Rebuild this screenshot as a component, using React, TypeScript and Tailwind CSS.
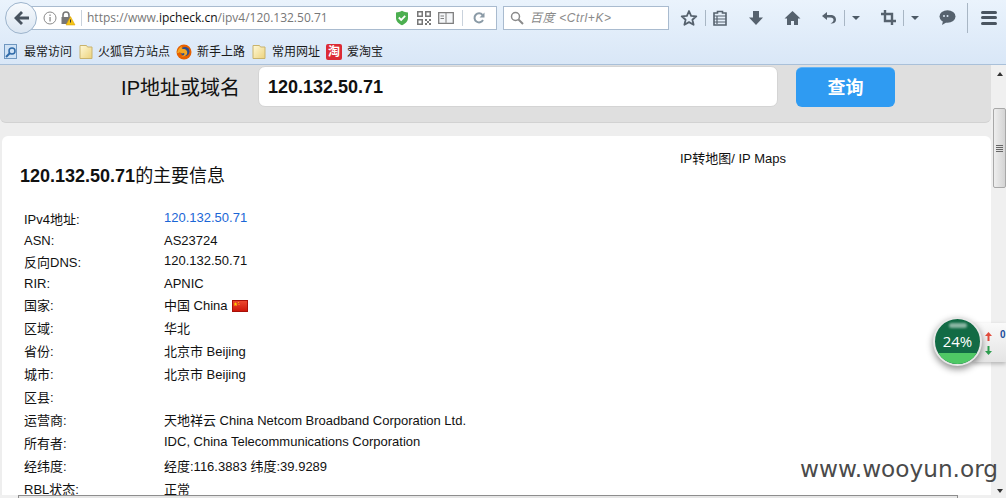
import React from "react";

const rows: { l: string; v?: React.ReactNode; h: string; rp?: string; vp?: string }[] = [
  { l: "IPv4地址:", v: <span className="text-[#1a66d6]">120.132.50.71</span>, h: "h-[23px]", rp: "translate-y-px", vp: "-translate-y-[2px]" },
  { l: "ASN:", v: "AS23724", h: "h-[22px]" },
  { l: "反向DNS:", v: "120.132.50.71", h: "h-[21px]", vp: "-translate-y-[2px]" },
  { l: "RIR:", v: "APNIC", h: "h-[22px]" },
  { l: "国家:", v: <span className="inline-flex items-center gap-1">中国 China <Flag /></span>, h: "h-[22px]" },
  { l: "区域:", v: "华北", h: "h-[23px]" },
  { l: "省份:", v: "北京市 Beijing", h: "h-[23px]" },
  { l: "城市:", v: "北京市 Beijing", h: "h-[23px]" },
  { l: "区县:", h: "h-[23px]" },
  { l: "运营商:", v: "天地祥云 China Netcom Broadband Corporation Ltd.", h: "h-[23px]" },
  { l: "所有者:", v: "IDC, China Telecommunications Corporation", h: "h-[23px]", vp: "-translate-y-[2px]" },
  { l: "经纬度:", v: "经度:116.3883 纬度:39.9289", h: "h-[23px]" },
  { l: "RBL状态:", v: "正常", h: "h-[23px]" },
];

function Flag() {
  return (
    <svg width="16" height="12" viewBox="0 0 16 12" className="inline-block">
      <defs>
        <linearGradient id="flagfill" x1="0" y1="0" x2="0" y2="1">
          <stop offset="0" stopColor="#ee4a30" />
          <stop offset="1" stopColor="#cc1508" />
        </linearGradient>
      </defs>
      <rect x="0.5" y="0.5" width="15" height="11" fill="url(#flagfill)" stroke="#a81008" />
      <path d="M3.500 2l.6 1.400 1.400.1-1 1 .3 1.500-1.300-.8-1.200.8.300-1.500-1-1 1.400-.1z" fill="#ffd000" />
      <circle cx="6.500" cy="2.500" r=".5" fill="#ffd000" />
      <circle cx="7" cy="4.500" r=".5" fill="#ffd000" />
    </svg>
  );
}

function Folder() {
  return (
    <svg width="14" height="16" viewBox="0 0 14 16" className="shrink-0">
      <defs>
        <linearGradient id="fg" x1="0" y1="0" x2="1" y2="1">
          <stop offset="0" stopColor="#fff9d8" />
          <stop offset="1" stopColor="#ecd27c" />
        </linearGradient>
      </defs>
      <path d="M1 1.500h6.500l1 1.500H13v11.500H1z" fill="url(#fg)" stroke="#c9b36c" />
    </svg>
  );
}

function Sep({ h = "h-[16px]" }: { h?: string }) {
  return <div className={`w-px ${h} bg-[#a8b6c4]`} />;
}

function Caret() {
  return <div className="w-0 h-0 border-x-[4px] border-x-transparent border-t-[4px] border-t-[#4d5a66]" />;
}

const I = "#56626e";

export default function App() {
  return (
    <div className="w-[1006px] h-[498px] overflow-hidden flex flex-col bg-[#eeeeee] font-['Liberation_Sans','Noto_Sans_CJK_SC',sans-serif] text-[13px] text-[#111]">
      {/* browser chrome */}
      <div className="h-[65px] shrink-0 flex flex-col border-b border-[#a9c0d9] bg-gradient-to-b from-[#eaf3fc] to-[#d9e7f7]">
        <div className="h-[36px] flex items-center pl-[5px] relative">
          {/* url bar */}
          <div className="ml-[12px] h-[24px] w-[480px] bg-white border border-[#a9bbcf] flex items-center pl-[25px] pr-[11px]">
            <svg width="14" height="14" viewBox="0 0 14 14" className="shrink-0">
              <circle cx="7" cy="7" r="6" fill="none" stroke="#8a8a8a" />
              <rect x="6.400" y="6" width="1.300" height="4.500" fill="#8a8a8a" />
              <rect x="6.400" y="3.500" width="1.300" height="1.400" fill="#8a8a8a" />
            </svg>
            <svg width="16" height="16" viewBox="0 0 16 16" className="ml-[3px] shrink-0">
              <path d="M3 8V5a3 3 0 016 0v3" fill="none" stroke="#777" strokeWidth="1.600" />
              <rect x="1.500" y="7" width="9" height="7" fill="#777" />
              <path d="M10.500 6.500l4.500 8.500H6z" fill="#f5c518" stroke="#d89c00" strokeWidth=".5" />
              <rect x="10" y="9.500" width="1" height="3" fill="#333" />
            </svg>
            <div className="w-px h-[16px] bg-[#c9d2dc] ml-[5px]" />
            <div className="ml-[5px] text-[12px] font-['Open_Sans',sans-serif] text-[#777] whitespace-nowrap">
              https://www.<span className="text-[#111]">ipcheck.cn</span>/ipv4/120.132.50.71
            </div>
            <div className="flex-1" />
            <svg width="14" height="16" viewBox="0 0 14 16" className="shrink-0">
              <path d="M1 2.500c2 0 4-.7 6-1.700 2 1 4 1.700 6 1.700V8c0 3.500-3 6-6 7.200C4 14 1 11.500 1 8z" fill="#4caf50" />
              <path d="M3.800 7.500l2.400 2.400 4-4" fill="none" stroke="#fff" strokeWidth="1.800" />
            </svg>
            <svg width="14" height="14" viewBox="0 0 14 14" className="ml-[8px] shrink-0" fill="#777">
              <path d="M0 0h6v6H0zM1.500 1.500v3h3v-3zM8 0h6v6H8zM9.500 1.500v3h3v-3zM0 8h6v6H0zM1.500 9.500v3h3v-3z" fillRule="evenodd" />
              <path d="M8 8h2v2H8zM12 8h2v2h-2zM10 10h2v2h-2zM8 12h2v2H8zM12 12h2v2h-2z" />
            </svg>
            <svg width="16" height="12" viewBox="0 0 16 12" className="ml-[7px] shrink-0">
              <path d="M.700.700h14.600v10.600H9l-1 .7-1-.7H.700z" fill="#f4f6f8" stroke="#7e7e7e" strokeWidth="1.300" />
              <path d="M8 1v10M2.500 4h3.500M2.500 6.500h3.500" stroke="#7e7e7e" />
            </svg>
            <div className="w-px h-[16px] bg-[#c9d2dc] ml-[8px]" />
            <svg width="12" height="12" viewBox="0 0 12 12" className="ml-[10px] shrink-0">
              <path d="M10 8a4.500 4.500 0 11-.5-5" fill="none" stroke="#8a9aa6" strokeWidth="2" />
              <path d="M11.500.500v5h-5z" fill="#8a9aa6" />
            </svg>
          </div>
          {/* search */}
          <div className="ml-[6px] h-[24px] w-[166px] bg-white border border-[#a9bbcf] flex items-center pl-[6px]">
            <svg width="14" height="14" viewBox="0 0 14 14" className="shrink-0">
              <circle cx="5.500" cy="5.500" r="4" fill="none" stroke="#8a8a8a" strokeWidth="1.500" />
              <path d="M8.500 8.500l4.500 4.500" stroke="#8a8a8a" strokeWidth="2" />
            </svg>
            <span className="ml-[6px] text-[12px] italic text-[#8a8a8a] whitespace-nowrap tracking-[0.6px]">百度 &lt;Ctrl+K&gt;</span>
          </div>
          {/* toolbar icons */}
          <div className="ml-[12px] flex items-center -mt-[1px]">
            <svg width="18" height="18" viewBox="0 0 18 18" className="-ml-[1px]">
              <path d="M9 2l2.100 4.800 5.200.5-3.900 3.400 1.200 5.100L9 13.100l-4.600 2.700 1.200-5.100-3.900-3.400 5.200-.5z" fill="none" stroke={I} strokeWidth="1.800" strokeLinejoin="round" />
            </svg>
            <div className="ml-[7px]"><Sep /></div>
            <svg width="14" height="16" viewBox="0 0 14 16" className="ml-[7px]">
              <path d="M1 3h3.500V1.500h5V3H13v12H1z" fill="none" stroke={I} strokeWidth="1.600" />
              <path d="M1 6h12M1 9h12M1 12h12M4 6v8" stroke={I} strokeWidth="1.200" />
            </svg>
            <svg width="16" height="16" viewBox="0 0 16 16" className="ml-[21px]">
              <path d="M5 1h6v6.500h4L8 15 1 7.500h4z" fill={I} />
            </svg>
            <svg width="17" height="16" viewBox="0 0 17 16" className="ml-[20px]">
              <path d="M8.500 1L.500 8.500h2.500V15h4v-4h3v4h4V8.500h2.500z" fill={I} />
            </svg>
            <svg width="16" height="16" viewBox="0 0 16 16" className="ml-[20px]">
              <path d="M6 2L1 6l5 4V7.500h3.500c2 0 3 1.200 3 2.600 0 1.400-1.200 2.900-3 3.400 3.500.5 5.500-1.500 5.500-3.800C15 7 13 5 9.500 5H6z" fill={I} />
            </svg>
            <div className="ml-[7px]"><Sep /></div>
            <div className="ml-[7px]"><Caret /></div>
            <svg width="15" height="15" viewBox="0 0 15 15" className="ml-[21px]">
              <path d="M4 0v11h11M0 4h11v11" fill="none" stroke={I} strokeWidth="2.400" />
            </svg>
            <div className="ml-[7px]"><Sep /></div>
            <div className="ml-[7px]"><Caret /></div>
            <svg width="17" height="15" viewBox="0 0 17 15" className="ml-[20px]">
              <ellipse cx="8.500" cy="6.500" rx="8" ry="6.200" fill={I} />
              <path d="M4 11l-1 4 5-3z" fill={I} />
              <circle cx="5" cy="6" r="1" fill="#dbe8f6" />
              <circle cx="8.500" cy="6" r="1" fill="#dbe8f6" />
            </svg>
            <div className="ml-[11px]"><Sep h="h-[30px]" /></div>
            <div className="ml-[13px] w-[16px] flex flex-col gap-[2.500px]">
              <div className="h-[3px] bg-[#4a5560] rounded-sm" />
              <div className="h-[3px] bg-[#4a5560] rounded-sm" />
              <div className="h-[3px] bg-[#4a5560] rounded-sm" />
            </div>
          </div>
          {/* back button, over the url bar */}
          <div className="absolute left-[5px] top-[2px] w-[32px] h-[32px] rounded-full bg-gradient-to-b from-[#f7fafd] to-[#dbe6f2] border border-[#9db4cc] flex items-center justify-center">
            <svg width="15" height="14" viewBox="0 0 15 14">
              <path d="M7 0L0 7l7 7 2-2-3.500-3.500H15v-3H5.500L9 2z" fill="#48535f" />
            </svg>
          </div>
        </div>
        {/* bookmarks */}
        <div className="flex-1 flex items-center pl-[4px] pt-[3px] text-[12px] text-[#1a1a1a] whitespace-nowrap">
          <svg width="15" height="15" viewBox="0 0 15 15" className="shrink-0">
            <rect x=".5" y=".5" width="12" height="14" fill="#cfe2f5" stroke="#6f97c0" />
            <circle cx="8" cy="7" r="3" fill="none" stroke="#2f6aa8" strokeWidth="1.500" />
            <path d="M6 9l-4 4" stroke="#2f6aa8" strokeWidth="2" />
          </svg>
          <span className="ml-[5px]">最常访问</span>
          <div className="ml-[7px]"><Folder /></div>
          <span className="ml-[5px]">火狐官方站点</span>
          <svg width="16" height="16" viewBox="0 0 16 16" className="ml-[6px] shrink-0">
            <circle cx="8" cy="8" r="7.500" fill="#e66000" />
            <circle cx="9" cy="7.500" r="4.500" fill="#2a4d8f" />
            <path d="M1 9c1-4 3-6 5-7 -1 2 0 3 1 3 3 0 5 2 4 5-1 2-4 3-6 2 3 0 4-2 3-3-2 1-4 0-4-1-1 1-2 1-3 1z" fill="#f5a623" />
          </svg>
          <span className="ml-[5px]">新手上路</span>
          <div className="ml-[7px]"><Folder /></div>
          <span className="ml-[6px]">常用网址</span>
          <div className="ml-[6px] w-[16px] h-[16px] rounded-[2px] bg-[#dc2b35] text-white text-[12px] leading-[16px] text-center font-bold overflow-hidden shrink-0">淘</div>
          <span className="ml-[5px]">爱淘宝</span>
        </div>
      </div>

      {/* page viewport */}
      <div className="flex-1 flex min-h-0 relative">
        <div className="w-[991px] shrink-0 flex flex-col overflow-hidden">
          {/* search panel */}
          <div className="h-[58px] shrink-0 bg-[#dfdfdf] border-b border-[#d2d2d2] rounded-b-[6px] flex items-start">
            <div className="w-[240px] text-right text-[20px] leading-[24px] pt-[11px]">IP地址或域名</div>
            <div className="ml-[18px] mt-[1px] w-[520px] h-[41px] bg-white border border-[#d4d4d4] rounded-[7px] pl-[9px] text-[18px] font-bold leading-[40px]">120.132.50.71</div>
            <div className="ml-[18px] mt-[2px] w-[99px] h-[40px] bg-[#2f9bf2] border-t border-[#62b3f5] rounded-[6px] text-white text-[18px] font-bold text-center leading-[40px]">查询</div>
          </div>
          {/* card */}
          <div className="mt-[13px] ml-[2px] flex-1 min-h-0 bg-white rounded-t-[6px] relative pl-[18px] overflow-hidden">
            <div className="absolute left-[678px] top-[15px] text-[13px] leading-[16px]">IP转地图/ IP Maps</div>
            <div className="pt-[28px] text-[18px] leading-[24px]"><b>120.132.50.71</b>的主要信息</div>
            <div className="mt-[19px] ml-[4px] flex flex-col text-[13px]">
              {rows.map((r) => (
                <div key={r.l} className={`flex items-center shrink-0 ${r.h} ${r.rp ?? ""}`}>
                  <div className="w-[140px] shrink-0">{r.l}</div>
                  <div className={r.vp}>{r.v}</div>
                </div>
              ))}
            </div>
          </div>
        </div>
        {/* vertical scrollbar */}
        <div className="flex-1 bg-[#f0f0f0] relative">
          <div className="absolute left-[6px] top-[7px] w-0 h-0 border-x-[3px] border-x-transparent border-b-[4px] border-b-[#333]" />
          <div className="absolute left-[2px] top-[43px] w-[13px] h-[80px] rounded-[2px] border border-[#a8a8a8] bg-gradient-to-r from-[#eeeeee] to-[#d4d4d4] flex flex-col items-center justify-center gap-[1px]">
            <div className="w-[7px] h-px bg-[#666]" />
            <div className="w-[7px] h-px bg-[#666]" />
            <div className="w-[7px] h-px bg-[#666]" />
            <div className="w-[7px] h-px bg-[#666]" />
          </div>
          <div className="absolute left-[6px] bottom-[5px] w-0 h-0 border-x-[3px] border-x-transparent border-t-[4px] border-t-[#333]" />
        </div>

        {/* floating network meter */}
        <div className="absolute left-[973px] top-[258px] w-[33px] h-[39px] bg-gradient-to-b from-[#fafafa] to-[#e4e4e4] shadow-[0_2px_4px_rgba(0,0,0,0.25)] rounded-l-[2px] text-[10px] leading-[12px]">
          <svg width="7" height="9" viewBox="0 0 7 9" className="absolute left-[12px] top-[9px]"><path d="M3.500 0L7 4H4.500v5h-2V4H0z" fill="#e24b3b" /></svg>
          <svg width="7" height="9" viewBox="0 0 7 9" className="absolute left-[12px] top-[23px]"><path d="M3.500 9L7 5H4.500V0h-2v5H0z" fill="#2e9e4f" /></svg>
          <span className="absolute left-[27px] top-[6px] text-[#1b4f9c] font-bold">0</span>
        </div>
        <div className="absolute left-[933px] top-[252px] w-[49px] h-[49px] rounded-full border-[2px] border-[#e8e8e8] shadow-[0_3px_7px_rgba(0,0,0,0.45)] overflow-hidden bg-[#126b45] flex items-center justify-center">
          <div className="absolute left-0 right-0 bottom-0 h-[11px] bg-[#4fc865]" />
          <div className="absolute left-[14px] top-[4px] w-[18px] h-[5px] rounded-full bg-white/50 blur-[1px]" />
          <span className="relative text-white text-[15px] leading-[16px] font-['Open_Sans',sans-serif] -mt-[2px]">24%</span>
        </div>

        {/* watermark */}
        <div className="absolute left-[800px] top-[390px] text-[23.2px] leading-[28px] text-[#4a4a4a] font-['DejaVu_Sans',sans-serif] whitespace-nowrap">www.wooyun.org</div>

        {/* horizontal scrollbar edge */}
        <div className="absolute left-0 right-[15px] bottom-0 h-[3px] bg-[#f0f0f0]">
          <div className="ml-[18px] w-[940px] h-[3px] bg-[#e6e6e6] border-t border-l border-r border-[#8d8d8d]" />
        </div>
      </div>
    </div>
  );
}
